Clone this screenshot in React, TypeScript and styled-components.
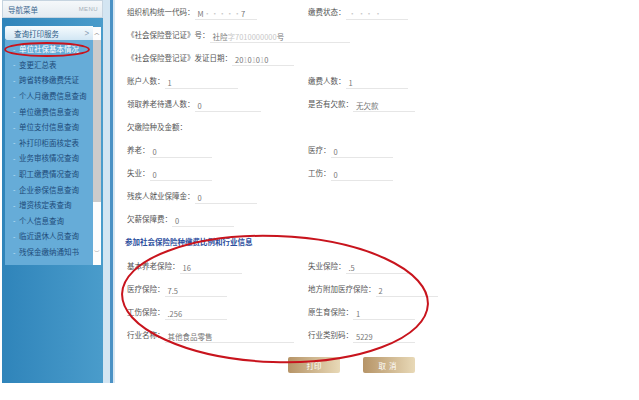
import React from "react";
import styled, { createGlobalStyle } from "styled-components";

const GlobalStyle = createGlobalStyle`
  html, body {
    margin: 0;
    padding: 0;
    background: #fff;
  }
  body {
    font-family: "Noto Sans CJK SC", "Noto Sans", sans-serif;
  }
`;

const Page = styled.div`
  position: relative;
  width: 639px;
  height: 400px;
  display: flex;
  align-items: flex-start;
  overflow: hidden;
`;

const Sidebar = styled.div`
  margin-left: 2px;
  width: 101px;
  height: 383px;
  display: flex;
  flex-direction: column;
  background: linear-gradient(to right, #2f84ba, #4a9ccb);
`;

const SideHeader = styled.div`
  height: 18px;
  box-sizing: border-box;
  display: flex;
  align-items: center;
  justify-content: space-between;
  padding: 0 4px 0 5px;
  background: linear-gradient(#f5f8fa, #e4ebf1);
  border: 1px solid #c6d4e0;
  font-size: 7.5px;
  color: #3e6990;
`;

const MenuTag = styled.span`
  font-family: "Liberation Sans", sans-serif;
  font-size: 6px;
  letter-spacing: 0.4px;
  color: #a5afb8;
`;

const SideBody = styled.div`
  flex: 1;
  padding: 8px 2px 0 3px;
`;

const ScrollFrame = styled.div`
  display: flex;
  height: 239px;
`;

const MenuCol = styled.div`
  width: 88px;
  display: flex;
  flex-direction: column;
`;

const GroupButton = styled.div`
  height: 14px;
  box-sizing: border-box;
  display: flex;
  align-items: center;
  justify-content: space-between;
  padding: 0 2px 0 9px;
  border-radius: 2px 0 0 2px;
  background: linear-gradient(#f6fbfe, #d2e6f4);
  font-size: 7.5px;
  color: #2b5a86;
`;

const Chevron = styled.span`
  font-family: "DejaVu Sans", sans-serif;
  font-size: 9px;
  color: #8aa2b6;
  transform: scaleX(0.7);
`;

const MenuList = styled.ul`
  flex: 1;
  margin: 0;
  padding: 1px 0 0;
  list-style: none;
  background: #66acd8;
`;

const MenuItem = styled.li<{ $active?: boolean }>`
  height: 15.6px;
  display: flex;
  align-items: center;
  padding-left: 8px;
  font-size: 7.5px;
  white-space: nowrap;
  color: ${(p) => (p.$active ? "#ffffff" : "#1d4a78")};

  &::before {
    content: "-";
    width: 6px;
    color: #cfe9f8;
    font-size: 7px;
  }
`;

const ScrollBar = styled.div`
  width: 8px;
  margin-top: 1px;
  display: flex;
  flex-direction: column;
  background: #fdfdfd;
`;

const ScrollArrow = styled.div<{ $h: number }>`
  height: ${(p) => p.$h}px;
  display: flex;
  align-items: center;
  justify-content: center;
  font-family: "DejaVu Sans", sans-serif;
  font-size: 6px;
  color: #555;
`;

const ScrollThumb = styled.div`
  height: 162px;
  background: #cbcbcb;
`;

const ScrollTrack = styled.div`
  flex: 1;
  display: flex;
  flex-direction: column;
  justify-content: flex-end;
  padding-bottom: 9px;
`;

const Divider = styled.div`
  width: 12px;
  height: 383px;
  background: linear-gradient(
    to right,
    #d3e5f2 0 7px,
    #4b92c5 7px 10px,
    #d8e7f2 10px 12px
  );
`;

const Main = styled.div`
  flex: 1;
  padding: 4px 0 0 12px;
`;

const Row = styled.div`
  display: flex;
  height: 16px;
  margin-bottom: 7px;
`;

const Cell = styled.div<{ $w?: number }>`
  display: flex;
  align-items: center;
  width: ${(p) => (p.$w ? `${p.$w}px` : "auto")};
`;

const Label = styled.span`
  font-size: 7.5px;
  line-height: 16px;
  color: #555;
  white-space: nowrap;
`;

const Value = styled.div<{ $w: number }>`
  width: ${(p) => p.$w}px;
  height: 16px;
  box-sizing: border-box;
  padding: 4px 0 0 3px;
  border-bottom: 1px solid #e6e6e6;
  font-size: 7.5px;
  line-height: 11px;
  color: #777;
  white-space: nowrap;
`;

const Faint = styled.span`
  color: #c8c8c8;
`;

const Heading = styled.div`
  height: 16px;
  margin: 2px 0 8px -2px;
  line-height: 16px;
  font-size: 7.5px;
  font-weight: bold;
  color: #2d4f9e;
`;

const ButtonRow = styled.div`
  display: flex;
  gap: 23px;
  margin-top: 14px;
  padding-left: 161px;
`;

const GoldButton = styled.button<{ $spaced?: boolean }>`
  width: 52px;
  height: 16px;
  padding: 0;
  border: none;
  border-radius: 2px;
  background: linear-gradient(to right, #b69467, #e8d9b7);
  color: #fff;
  font-family: inherit;
  font-size: 7.5px;
  letter-spacing: ${(p) => (p.$spaced ? "3px" : "0")};
`;

const Overlay = styled.svg`
  position: absolute;
  top: 0;
  left: 0;
  pointer-events: none;
`;

const menuItems = [
  "单位社保基本情况",
  "变更汇总表",
  "跨省转移缴费凭证",
  "个人月缴费信息查询",
  "单位缴费信息查询",
  "单位支付信息查询",
  "补打印柜面核定表",
  "业务审核情况查询",
  "职工缴费情况查询",
  "企业参保信息查询",
  "增资核定表查询",
  "个人信息查询",
  "临近退休人员查询",
  "残保金缴纳通知书",
];

type F = { label: string; value: React.ReactNode; w?: number };

function Field({ label, value, w = 62 }: F) {
  return (
    <>
      <Label>{label}</Label>
      <Value $w={w}>{value}</Value>
    </>
  );
}

function TwoCol({ left, right }: { left: F; right?: F }) {
  return (
    <Row>
      <Cell $w={181}>
        <Field {...left} />
      </Cell>
      {right && (
        <Cell>
          <Field {...right} />
        </Cell>
      )}
    </Row>
  );
}

export default function App() {
  return (
    <>
      <GlobalStyle />
      <Page>
        <Sidebar>
          <SideHeader>
            <span>导航菜单</span>
            <MenuTag>MENU</MenuTag>
          </SideHeader>
          <SideBody>
            <ScrollFrame>
              <MenuCol>
                <GroupButton>
                  <span>查询打印服务</span>
                  <Chevron>&gt;</Chevron>
                </GroupButton>
                <MenuList>
                  {menuItems.map((m, i) => (
                    <MenuItem key={m} $active={i === 0}>
                      {m}
                    </MenuItem>
                  ))}
                </MenuList>
              </MenuCol>
              <ScrollBar>
                <ScrollArrow $h={13}>︿</ScrollArrow>
                <ScrollThumb />
                <ScrollTrack>
                  <ScrollArrow $h={8}>﹀</ScrollArrow>
                </ScrollTrack>
              </ScrollBar>
            </ScrollFrame>
          </SideBody>
        </Sidebar>
        <Divider />
        <Main>
          <TwoCol
            left={{
              label: "组织机构统一代码：",
              value: (
                <>
                  M<Faint>·····</Faint>7
                </>
              ),
            }}
            right={{ label: "缴费状态：", value: <Faint>· ·· ·</Faint> }}
          />
          <Row>
            <Cell>
              <Field
                label="《社会保险登记证》号："
                w={140}
                value={
                  <>
                    社险<Faint>字7010000000</Faint>号
                  </>
                }
              />
            </Cell>
          </Row>
          <Row>
            <Cell>
              <Field
                label="《社会保险登记证》发证日期："
                value={
                  <>
                    20<Faint>1</Faint>0<Faint>1</Faint>0<Faint>1</Faint>0
                  </>
                }
              />
            </Cell>
          </Row>
          <TwoCol
            left={{ label: "账户人数：", value: "1", w: 73 }}
            right={{ label: "缴费人数：", value: "1" }}
          />
          <TwoCol
            left={{ label: "领取养老待遇人数：", value: "0", w: 66 }}
            right={{ label: "是否有欠款：", value: "无欠款" }}
          />
          <Row>
            <Cell>
              <Label>欠缴险种及金额：</Label>
            </Cell>
          </Row>
          <TwoCol
            left={{ label: "养老：", value: "0" }}
            right={{ label: "医疗：", value: "0" }}
          />
          <TwoCol
            left={{ label: "失业：", value: "0" }}
            right={{ label: "工伤：", value: "0" }}
          />
          <TwoCol left={{ label: "残疾人就业保障金：", value: "0" }} />
          <TwoCol left={{ label: "欠薪保障费：", value: "0" }} />
          <Heading>参加社会保险险种缴费比例和行业信息</Heading>
          <TwoCol
            left={{ label: "基本养老保险：", value: "16" }}
            right={{ label: "失业保险：", value: ".5" }}
          />
          <TwoCol
            left={{ label: "医疗保险：", value: "7.5" }}
            right={{ label: "地方附加医疗保险：", value: "2" }}
          />
          <TwoCol
            left={{ label: "工伤保险：", value: ".256" }}
            right={{ label: "原生育保险：", value: "1" }}
          />
          <TwoCol
            left={{ label: "行业名称：", value: "其他食品零售", w: 129 }}
            right={{ label: "行业类别码：", value: "5229" }}
          />
          <ButtonRow>
            <GoldButton>打印</GoldButton>
            <GoldButton $spaced>取消</GoldButton>
          </ButtonRow>
        </Main>
        <Overlay width="639" height="400" viewBox="0 0 639 400">
          <ellipse
            cx="47"
            cy="49.5"
            rx="42"
            ry="6.5"
            fill="none"
            stroke="#c8141d"
            strokeWidth="1.8"
          />
          <ellipse
            cx="275"
            cy="299"
            rx="153"
            ry="63"
            transform="rotate(2 275 299)"
            fill="none"
            stroke="#c8141d"
            strokeWidth="2"
          />
        </Overlay>
      </Page>
    </>
  );
}
